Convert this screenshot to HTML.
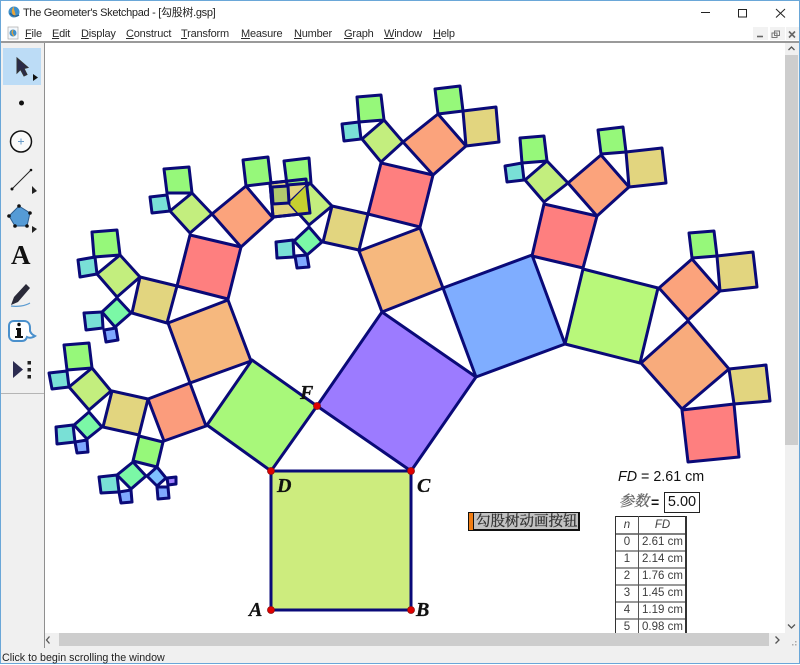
<!DOCTYPE html>
<html>
<head>
<meta charset="utf-8">
<title>The Geometer's Sketchpad</title>
<style>
html,body{margin:0;padding:0;background:#fff;}
body{width:800px;height:664px;position:relative;overflow:hidden;font-family:"Liberation Sans","Noto Sans CJK SC",sans-serif;color:#222;}
.a{position:absolute;white-space:nowrap;}
.m{position:absolute;top:27px;font-size:11px;letter-spacing:-.2px;line-height:14px;color:#2a2a2a;white-space:nowrap;}
.m u{text-decoration:underline;}
.lab{position:absolute;font-family:"Liberation Serif",serif;font-weight:bold;font-style:italic;font-size:20px;line-height:20px;color:#111;-webkit-text-stroke:.3px #111;}
.cell{position:absolute;font-size:11.5px;line-height:14px;color:#3c3c3c;text-align:center;white-space:nowrap;}
</style>
</head>
<body>
<div class="a" style="left:0;top:0;width:800px;height:1px;background:#6aa7d8;"></div>
<div class="a" style="left:0;top:0;width:1px;height:664px;background:#6aa7d8;"></div>
<div class="a" style="left:799px;top:0;width:1px;height:664px;background:#6aa7d8;"></div>
<div class="a" style="left:0;top:663px;width:800px;height:1px;background:#6aa7d8;"></div>

<svg class="a" style="left:7px;top:5px;" width="14" height="14" viewBox="0 0 14 14">
<circle cx="7" cy="7" r="5.500" fill="#3f8fc9"/><path d="M7 1.500C4 4 4 9 8 12.500C10 9 6 5 7 1.500Z" fill="#e9a53a"/><path d="M3 8c2 3 6 4 9 2" stroke="#1d5f96" stroke-width="1.400" fill="none"/>
</svg>
<div class="a" style="left:23px;top:6px;font-size:11px;letter-spacing:-.3px;line-height:15px;color:#222;">The Geometer's Sketchpad - [勾股树.gsp]</div>

<svg class="a" style="left:0;top:0;" width="800" height="44">
<path d="M701 12.500H710" stroke="#222" stroke-width="1"/>
<rect x="738.500" y="9.500" width="8" height="7.500" fill="none" stroke="#222" stroke-width="1"/>
<path d="M776 9L785 17.500M785 9L776 17.500" stroke="#222" stroke-width="1" fill="none"/>
<rect x="753" y="27" width="15" height="13" fill="#f2f2f2"/>
<rect x="770" y="27" width="15" height="13" fill="#f2f2f2"/>
<rect x="786" y="27" width="13" height="13" fill="#f2f2f2"/>
<path d="M757 36.500H763" stroke="#666" stroke-width="1.600"/>
<rect x="772" y="33" width="5" height="4.500" fill="none" stroke="#777" stroke-width="1"/>
<rect x="774.500" y="31" width="5" height="4.500" fill="none" stroke="#777" stroke-width="1"/>
<path d="M789 31.500L795 37.500M795 31.500L789 37.500" stroke="#666" stroke-width="1.600"/>
<rect x="8" y="27" width="10" height="12" fill="#f4f8fc" stroke="#aaa" stroke-width=".7"/>
<circle cx="13" cy="33" r="3.500" fill="#3f8fc9"/><path d="M13 30c-1.500 2-1 4 1 6" stroke="#e9a53a" stroke-width="1.200" fill="none"/>
</svg>

<div class="m" style="left:25px"><u>F</u>ile</div>
<div class="m" style="left:52px"><u>E</u>dit</div>
<div class="m" style="left:81px"><u>D</u>isplay</div>
<div class="m" style="left:126px"><u>C</u>onstruct</div>
<div class="m" style="left:181px"><u>T</u>ransform</div>
<div class="m" style="left:241px"><u>M</u>easure</div>
<div class="m" style="left:294px"><u>N</u>umber</div>
<div class="m" style="left:344px"><u>G</u>raph</div>
<div class="m" style="left:384px"><u>W</u>indow</div>
<div class="m" style="left:433px"><u>H</u>elp</div>

<div class="a" style="left:1px;top:41px;width:798px;height:2px;background:#9a9a9a;"></div>
<div class="a" style="left:1px;top:43px;width:43px;height:605px;background:#f0f0f0;"></div>
<div class="a" style="left:44px;top:43px;width:1px;height:605px;background:#8f8f8f;"></div>
<div class="a" style="left:1px;top:393px;width:43px;height:1px;background:#b5b5b5;"></div>
<div class="a" style="left:3px;top:48px;width:38px;height:37px;background:#bcdcf6;"></div>

<svg class="a" style="left:0;top:44px;" width="44" height="350" viewBox="0 44 44 350">
<path d="M17 58L17 73L20.500 69.500L24 76L27 74.500L24 68.500L28 67.500Z" fill="#2a2a48" stroke="#333" stroke-width="1"/>
<path d="M33 74L38 77.500L33 81Z" fill="#111"/>
<circle cx="21.500" cy="103" r="2.500" fill="#111"/>
<circle cx="21" cy="141.500" r="10.500" fill="#fafafa" stroke="#111" stroke-width="1.500"/>
<path d="M18 141.500H24M21 138.500V144.500" stroke="#6a9cc8" stroke-width="1"/>
<path d="M12 189L31 170" stroke="#222" stroke-width="1"/>
<circle cx="12" cy="189" r="1.500" fill="#111"/><circle cx="31" cy="170" r="1.300" fill="#111"/>
<path d="M32 186L37 191L32 194Z" fill="#222"/>
<path d="M19 206L30 213L27 226L15 226L9 216Z" fill="#559bd6" stroke="#2c5d8f" stroke-width="1"/>
<g fill="#111"><circle cx="19" cy="206" r="1.800"/><circle cx="30" cy="213" r="1.800"/><circle cx="27" cy="226" r="1.800"/><circle cx="15" cy="226" r="1.800"/><circle cx="9" cy="216" r="1.800"/></g>
<path d="M32 226L37 229L32 233Z" fill="#222"/>
<path d="M14 297L26 284L30 288L18 302L11 305Z" fill="#2a2a38"/>
<path d="M11 306C17 307 25 306 30 303" stroke="#5b9bd1" stroke-width="1.200" fill="none"/>
<path d="M14 321H24C28 321 30 324 30 328L30 331C31 334 33 335 35 336C32 338 29 338 27 337C26 340 24 341 22 341H14C11 341 9 338 9 336V326C9 323 11 321 14 321Z" fill="#fff" stroke="#4a90cc" stroke-width="2"/>
<circle cx="19" cy="324.500" r="1.700" fill="#111"/>
<path d="M16 328H21V336H23V338H15V336H17V330H16Z" fill="#111"/>
<path d="M13 361L23 369.500L13 378Z" fill="#2c2c50"/>
<rect x="27.500" y="361" width="3.500" height="3.500" fill="#222"/><rect x="27.500" y="368" width="3.500" height="3.500" fill="#222"/><rect x="27.500" y="375" width="3.500" height="3.500" fill="#222"/>
</svg>
<div class="a" style="left:11px;top:241px;font-family:'Liberation Serif',serif;font-weight:bold;font-size:27px;line-height:28px;color:#111;">A</div>

<svg class="a" style="left:0;top:0;" width="800" height="664">
<g stroke="#0a0a78" stroke-width="3" stroke-linejoin="round">
<polygon fill="#cdec7e" points="271,610 411,610 411,471 271,471"/>
<polygon fill="#9c7bff" points="411,471 317,406 382,312 476,377"/>
<polygon fill="#a8f87a" points="271,471 317,406 252,360 207,425"/>
<polygon fill="#7fadff" points="443,288 532,255 565,344 476,377"/>
<polygon fill="#f6b87e" points="359,251 420,228 443,288 382,312"/>
<polygon fill="#fe7f7f" points="381,163 433,175 420,227 368,214"/>
<polygon fill="#e2d57f" points="332,206 368,214 359,250 323,242"/>
<polygon fill="#c3ee7e" points="381,162 403,142 384,120 362,139"/>
<polygon fill="#fba37c" points="403,142 438,114 466,146 433,175"/>
<polygon fill="#e2d57f" points="463,111 496,107 499,142 466,146"/>
<polygon fill="#96f87a" points="435,89 460,86 463,111 438,114"/>
<polygon fill="#96f87a" points="357,97 381,95 384,120 359,122"/>
<polygon fill="#79e0d6" points="342,124 359,122 361,139 344,141"/>

<polygon fill="#e2d57f" points="270,183 306,179 310,213 273,217"/>
<polygon fill="#96f87a" points="284,161 309,158 311,183 287,185"/>
<polygon fill="#c3ee7e" points="310,183 332,206 309,225 289,203"/>
<polygon fill="#c6cf2f" stroke="none" points="289,203 307,185 310,213 299,214"/>
<polygon fill="#b0c96e" points="272,187 288,186 289,203 273,204"/>
<polygon fill="none" points="270,183 306,179 310,213 273,217"/>
<polygon fill="#7bf8a6" points="309,227 322,242 307,255 294,241"/>
<polygon fill="#79e0d6" points="276,242 293,240 294,257 277,258"/>
<polygon fill="#7fa8ff" points="295,256 307,255 309,267 297,268"/>

<polygon fill="#fe7f7f" points="190,235 241,247 228,299 177,286"/>
<polygon fill="#f6b87e" points="168,323 228,300 251,361 190,383"/>
<polygon fill="#c3ee7e" points="190,233 212,214 192,193 170,211"/>
<polygon fill="#fba37c" points="212,214 246,186 273,218 241,247"/>
<polygon fill="#96f87a" points="164,169 189,167 192,193 167,193"/>
<polygon fill="#79e0d6" points="150,197 167,195 170,211 152,213"/>
<polygon fill="#96f87a" points="243,160 268,157 271,183 246,186"/>
<polygon fill="#e2d57f" points="140,277 177,286 167,323 132,313"/>
<polygon fill="#c3ee7e" points="120,255 140,277 117,297 97,274"/>
<polygon fill="#96f87a" points="92,232 117,230 120,255 94,257"/>
<polygon fill="#79e0d6" points="78,260 95,257 97,274 80,277"/>
<polygon fill="#7bf8a6" points="117,298 131,313 115,327 102,312"/>
<polygon fill="#79e0d6" points="84,313 102,312 103,328 86,330"/>
<polygon fill="#7fa8ff" points="104,330 116,328 118,340 106,342"/>

<polygon fill="#fb9c7c" points="148,399 190,383 206,426 164,441"/>
<polygon fill="#e2d57f" points="112,391 148,399 139,435 103,427"/>
<polygon fill="#c3ee7e" points="92,368 111,391 89,410 69,387"/>
<polygon fill="#96f87a" points="64,345 89,343 92,368 67,370"/>
<polygon fill="#79e0d6" points="49,373 67,371 69,387 52,389"/>
<polygon fill="#7bf8a6" points="89,412 102,427 87,439 74,425"/>
<polygon fill="#79e0d6" points="56,427 73,425 75,442 57,444"/>
<polygon fill="#7fa8ff" points="75,442 87,440 88,452 77,453"/>
<polygon fill="#96f87a" points="139,436 163,442 157,467 133,461"/>
<polygon fill="#7bf8a6" points="133,462 146,476 131,489 117,475"/>
<polygon fill="#79e0d6" points="99,477 117,475 119,492 101,493"/>
<polygon fill="#7fa8ff" points="119,492 131,490 132,502 121,503"/>
<polygon fill="#7fc0ff" points="157,467 166,478 157,486 147,476"/>
<polygon fill="#a080ff" points="167,478 176,477 176,484 168,485"/>
<polygon fill="#7fa8ff" points="157,487 168,487 169,498 158,499"/>

<polygon fill="#fe7f7f" points="544,204 597,216 583,268 532,256"/>
<polygon fill="#c3ee7e" points="544,202 568,183 547,161 525,180"/>
<polygon fill="#fba37c" points="568,183 601,155 629,187 597,216"/>
<polygon fill="#96f87a" points="520,138 544,136 547,161 522,163"/>
<polygon fill="#79e0d6" points="505,166 522,163 524,180 507,182"/>
<polygon fill="#96f87a" points="598,130 623,127 626,152 601,154"/>
<polygon fill="#e2d57f" points="626,152 662,148 666,183 629,187"/>
<polygon fill="#b8f87a" points="583,269 658,288 640,363 565,344"/>
<polygon fill="#fba37c" points="659,288 692,259 720,291 688,320"/>
<polygon fill="#96f87a" points="689,233 714,231 717,256 692,258"/>
<polygon fill="#e2d57f" points="717,256 753,252 757,287 720,291"/>
<polygon fill="#f8ab7c" points="688,321 729,369 682,409 641,363"/>
<polygon fill="#e2d57f" points="729,369 766,365 770,401 734,404"/>
<polygon fill="#fe7f7f" points="682,410 734,404 739,457 688,462"/>
</g>
<g fill="#e00000" stroke="#8a1010" stroke-width=".8">
<circle cx="271" cy="610" r="3.500"/><circle cx="411" cy="610" r="3.500"/><circle cx="411" cy="471" r="3.500"/><circle cx="271" cy="471" r="3.500"/><circle cx="317" cy="406" r="3.500"/>
</g>
</svg>

<div class="lab" style="left:300px;top:383px;">F</div>
<div class="lab" style="left:277px;top:476px;">D</div>
<div class="lab" style="left:417px;top:476px;">C</div>
<div class="lab" style="left:249px;top:600px;">A</div>
<div class="lab" style="left:416px;top:600px;">B</div>

<div class="a" style="left:468px;top:512px;width:112px;height:19px;background:#111;"></div>
<div class="a" style="left:469px;top:513px;width:4px;height:17px;background:#f07d14;"></div>
<div class="a" style="left:474px;top:513px;width:104px;height:16px;background:#c2c2c2;"></div>
<div class="a" style="left:476px;top:513px;font-family:'Liberation Serif','Noto Serif CJK SC',serif;font-size:14.500px;line-height:18px;color:#333;-webkit-text-stroke:.3px #333;">勾股树动画按钮</div>

<div class="a" style="left:618px;top:469px;font-size:14.300px;line-height:16px;color:#111;"><i>FD</i> = 2.61 cm</div>
<div class="a" style="left:619px;top:493px;font-family:'Liberation Serif','Noto Serif CJK SC',serif;font-style:italic;font-size:15px;line-height:18px;color:#666;-webkit-text-stroke:.3px #666;">参数</div>
<div class="a" style="left:651px;top:494px;font-size:14px;line-height:16px;font-weight:bold;color:#111;">=</div>
<div class="a" style="left:664px;top:492px;width:34px;height:19px;border:1px solid #222;font-size:14.500px;line-height:19px;text-align:center;color:#111;">5.00</div>

<div class="a" style="left:615px;top:516px;width:72px;height:117px;overflow:hidden;">
<div class="a" style="left:0;top:17px;width:72px;height:2px;background:#808080;"></div>
<div class="a" style="left:0;top:34px;width:72px;height:2px;background:#999;"></div>
<div class="a" style="left:0;top:51px;width:72px;height:2px;background:#999;"></div>
<div class="a" style="left:0;top:68px;width:72px;height:2px;background:#999;"></div>
<div class="a" style="left:0;top:85px;width:72px;height:2px;background:#999;"></div>
<div class="a" style="left:0;top:102px;width:72px;height:2px;background:#999;"></div>
<div class="a" style="left:0;top:0;width:72px;height:1px;background:#222;"></div>
<div class="a" style="left:0;top:0;width:1px;height:117px;background:#333;"></div>
<div class="a" style="left:23px;top:0;width:1px;height:117px;background:#555;"></div>
<div class="a" style="left:70px;top:0;width:2px;height:117px;background:#333;"></div>
<div class="cell" style="left:1px;width:22px;top:2px;"><i>n</i></div><div class="cell" style="left:24px;width:47px;top:2px;"><i>FD</i></div>
<div class="cell" style="left:1px;width:22px;top:19px;">0</div><div class="cell" style="left:24px;width:47px;top:19px;">2.61 cm</div>
<div class="cell" style="left:1px;width:22px;top:36px;">1</div><div class="cell" style="left:24px;width:47px;top:36px;">2.14 cm</div>
<div class="cell" style="left:1px;width:22px;top:53px;">2</div><div class="cell" style="left:24px;width:47px;top:53px;">1.76 cm</div>
<div class="cell" style="left:1px;width:22px;top:70px;">3</div><div class="cell" style="left:24px;width:47px;top:70px;">1.45 cm</div>
<div class="cell" style="left:1px;width:22px;top:87px;">4</div><div class="cell" style="left:24px;width:47px;top:87px;">1.19 cm</div>
<div class="cell" style="left:1px;width:22px;top:104px;">5</div><div class="cell" style="left:24px;width:47px;top:104px;">0.98 cm</div>
</div>

<div class="a" style="left:785px;top:43px;width:14px;height:590px;background:#f0f0f0;"></div>
<div class="a" style="left:785px;top:55px;width:13px;height:390px;background:#cdcdcd;"></div>
<div class="a" style="left:45px;top:633px;width:754px;height:15px;background:#f0f0f0;"></div>
<div class="a" style="left:59px;top:633px;width:710px;height:13px;background:#cdcdcd;"></div>
<svg class="a" style="left:0;top:0;" width="800" height="664">
<path d="M788.500 50L791.500 47L794.500 50" stroke="#555" stroke-width="1.300" fill="none"/>
<path d="M788 624.500L791.500 628L795 624.500" stroke="#555" stroke-width="1.300" fill="none"/>
<path d="M49.500 636.500L46.500 640L49.500 643.500" stroke="#555" stroke-width="1.300" fill="none"/>
<path d="M775.500 636.500L779 640L775.500 643.500" stroke="#555" stroke-width="1.300" fill="none"/>
<g fill="#aaa"><rect x="795" y="641" width="1.500" height="1.500"/><rect x="792" y="644" width="1.500" height="1.500"/><rect x="795" y="644" width="1.500" height="1.500"/><rect x="795" y="656" width="1.500" height="1.500"/><rect x="792" y="659" width="1.500" height="1.500"/><rect x="795" y="659" width="1.500" height="1.500"/></g>
</svg>

<div class="a" style="left:1px;top:648px;width:798px;height:15px;background:#f0f0f0;"></div>
<div class="a" style="left:2px;top:651px;font-size:10.700px;line-height:14px;color:#222;">Click to begin scrolling the window</div>
</body>
</html>
